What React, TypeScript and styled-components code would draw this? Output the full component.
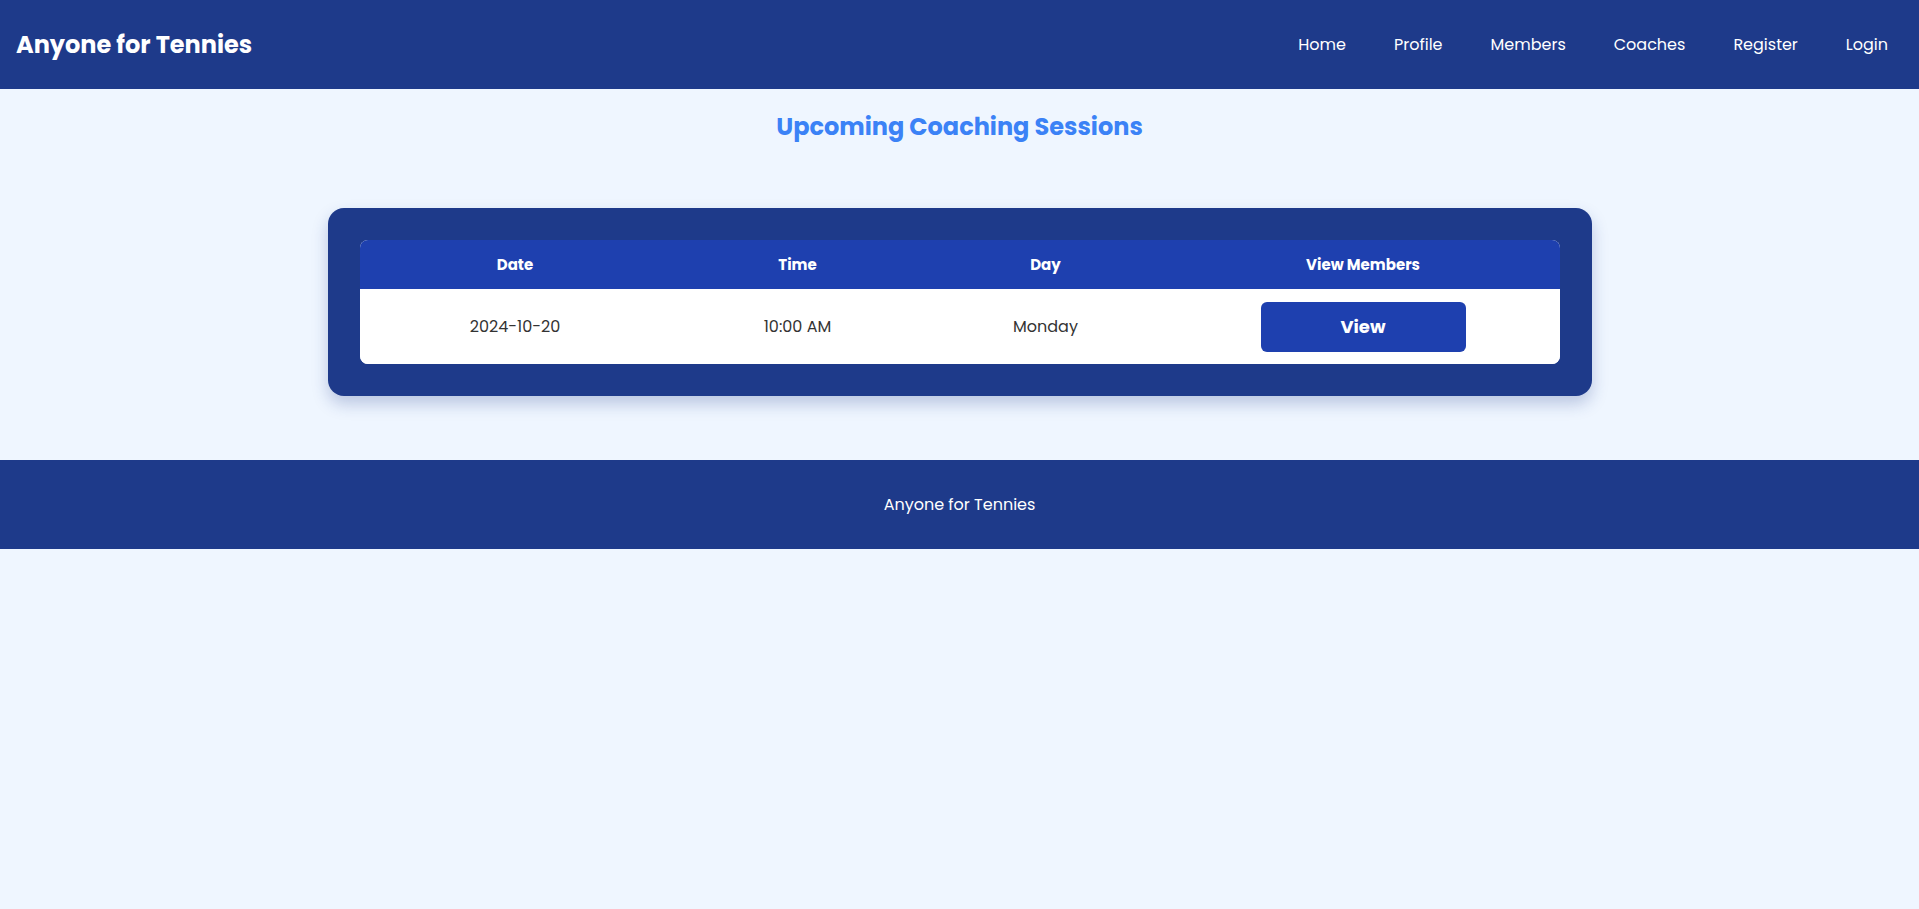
import React from "react";
import styled, { createGlobalStyle } from "styled-components";

const GlobalStyle = createGlobalStyle`
  html, body {
    margin: 0;
    padding: 0;
    background: #eff6ff;
    font-family: "Poppins", "Open Sans", "Noto Sans", sans-serif;
  }
  * { box-sizing: border-box; }
`;

const Header = styled.header`
  height: 89px;
  background: #1e3a8a;
  display: flex;
  align-items: center;
  justify-content: space-between;
  padding: 0 31px 0 16px;
`;

const Logo = styled.div`
  color: #ffffff;
  font-size: 24px;
  font-weight: 700;
`;

const Nav = styled.nav`
  display: flex;
  gap: 48px;
`;

const NavLink = styled.a`
  color: #ffffff;
  font-size: 16px;
  font-weight: 400;
  text-decoration: none;
  cursor: pointer;
`;

const Main = styled.main`
  padding: 20px 0 64px;
  display: flex;
  flex-direction: column;
  align-items: center;
`;

const Title = styled.h2`
  margin: 0 0 63px;
  color: #3b82f6;
  font-size: 24px;
  font-weight: 700;
  line-height: 36px;
  text-align: center;
`;

const Card = styled.section`
  width: 1264px;
  background: #1e3a8a;
  border-radius: 16px;
  padding: 32px;
  box-shadow: 0 8px 16px rgba(30, 58, 138, 0.25);
`;

const Table = styled.div`
  border-radius: 8px;
  overflow: hidden;
  background: #ffffff;
`;

const Row = styled.div<{ $head?: boolean }>`
  display: grid;
  grid-template-columns: 311px 254px 242px 1fr;
  align-items: center;
  height: ${(p) => (p.$head ? "49px" : "75px")};
  background: ${(p) => (p.$head ? "#1e40af" : "#ffffff")};
`;

const HeadCell = styled.div`
  text-align: center;
  color: #ffffff;
  font-size: 15px;
  font-weight: 700;
`;

const Cell = styled.div`
  text-align: center;
  color: #333333;
  font-size: 16px;
  font-weight: 400;
  display: flex;
  justify-content: center;
`;

const ViewButton = styled.button`
  width: 205px;
  height: 50px;
  border: none;
  border-radius: 6px;
  background: #1e40af;
  color: #ffffff;
  font-family: inherit;
  font-size: 18px;
  font-weight: 700;
  cursor: pointer;
`;

const Footer = styled.footer`
  height: 89px;
  background: #1e3a8a;
  display: flex;
  align-items: center;
  justify-content: center;
  color: #ffffff;
  font-size: 16px;
`;

const navItems = ["Home", "Profile", "Members", "Coaches", "Register", "Login"];

const sessions = [{ date: "2024-10-20", time: "10:00 AM", day: "Monday" }];

export default function App() {
  return (
    <>
      <GlobalStyle />
      <Header>
        <Logo>Anyone for Tennies</Logo>
        <Nav>
          {navItems.map((n) => (
            <NavLink key={n}>{n}</NavLink>
          ))}
        </Nav>
      </Header>
      <Main>
        <Title>Upcoming Coaching Sessions</Title>
        <Card>
          <Table>
            <Row $head>
              <HeadCell>Date</HeadCell>
              <HeadCell>Time</HeadCell>
              <HeadCell>Day</HeadCell>
              <HeadCell>View Members</HeadCell>
            </Row>
            {sessions.map((s) => (
              <Row key={s.date}>
                <Cell>{s.date}</Cell>
                <Cell>{s.time}</Cell>
                <Cell>{s.day}</Cell>
                <Cell>
                  <ViewButton>View</ViewButton>
                </Cell>
              </Row>
            ))}
          </Table>
        </Card>
      </Main>
      <Footer>Anyone for Tennies</Footer>
    </>
  );
}
